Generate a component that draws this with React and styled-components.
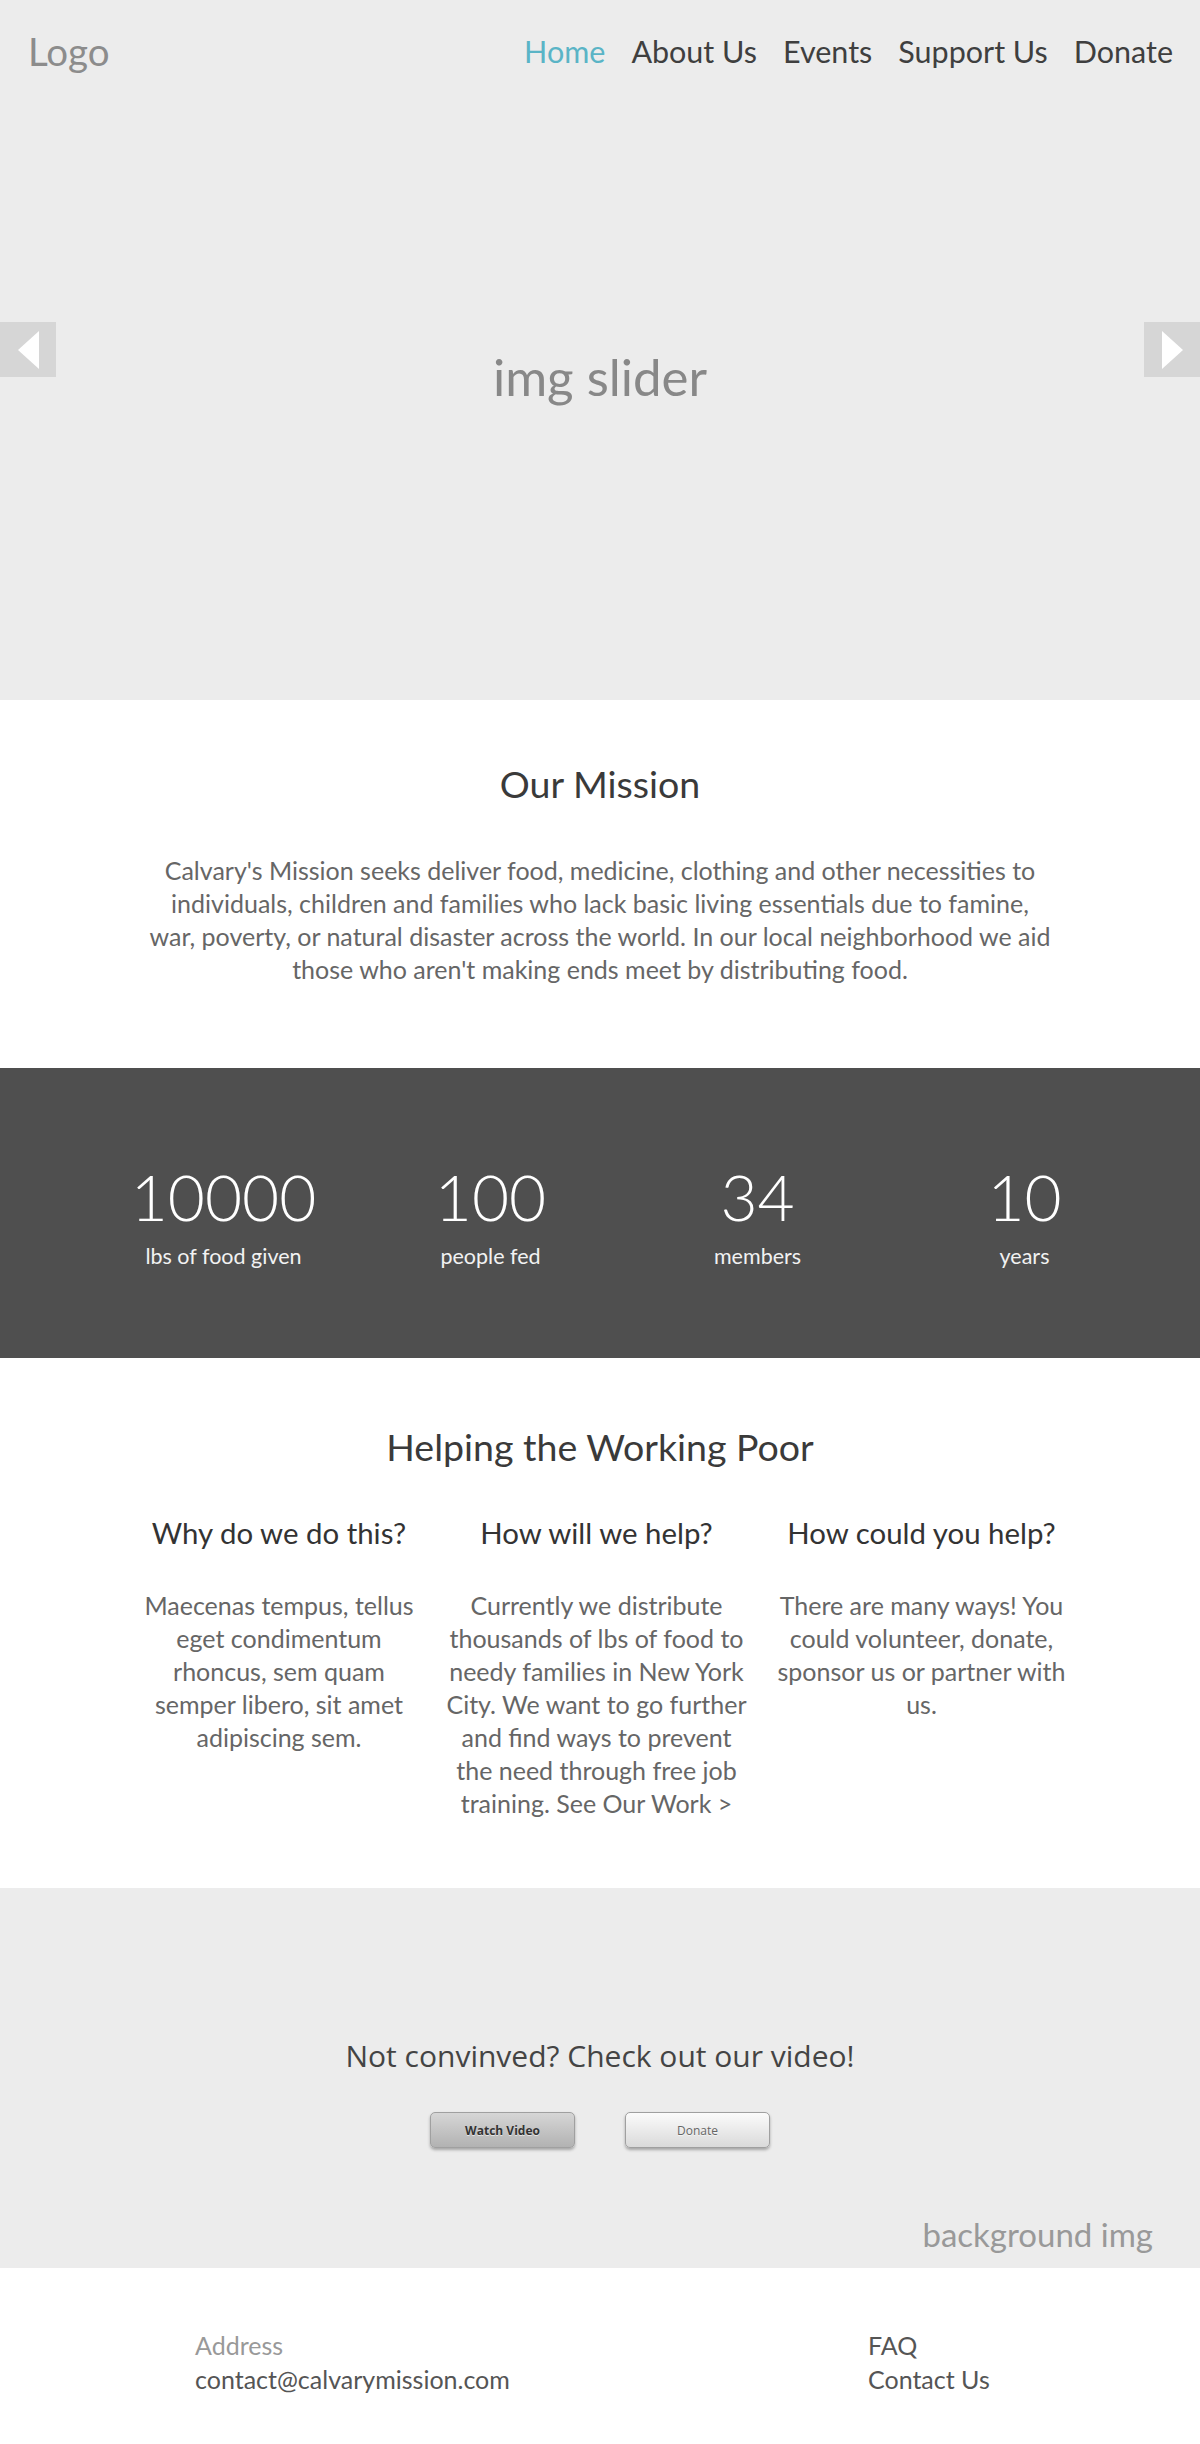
import React from 'react';
import styled, { createGlobalStyle } from 'styled-components';

const GlobalStyle = createGlobalStyle`
  body {
    margin: 0;
    font-family: Lato, "Open Sans", sans-serif;
    background: #fff;
  }
`;

const navItems = ['Home', 'About Us', 'Events', 'Support Us', 'Donate'];

const stats = [
  { value: '10000', label: 'lbs of food given' },
  { value: '100', label: 'people fed' },
  { value: '34', label: 'members' },
  { value: '10', label: 'years' },
];

const columns = [
  {
    title: 'Why do we do this?',
    text: 'Maecenas tempus, tellus eget condimentum rhoncus, sem quam semper libero, sit amet adipiscing sem.',
  },
  {
    title: 'How will we help?',
    text: 'Currently we distribute thousands of lbs of food to needy families in New York City. We want to go further and find ways to prevent the need through free job training. See Our Work >',
  },
  {
    title: 'How could you help?',
    text: 'There are many ways! You could volunteer, donate, sponsor us or partner with us.',
  },
];

const App = () => {
  return (
    <>
      <GlobalStyle />
      <Hero>
        <Header>
          <Logo>Logo</Logo>
          <Nav>
            {navItems.map((item) => (
              <NavLink key={item} active={item === 'Home' ? 1 : 0}>{item}</NavLink>
            ))}
          </Nav>
        </Header>
        <Slider>
          <Arrow side="left">
            <svg width="21" height="38" viewBox="0 0 21 38">
              <polygon points="0,19 21,0 21,38" fill="#fff" />
            </svg>
          </Arrow>
          <SliderLabel>img slider</SliderLabel>
          <Arrow side="right">
            <svg width="21" height="38" viewBox="0 0 21 38">
              <polygon points="21,19 0,0 0,38" fill="#fff" />
            </svg>
          </Arrow>
        </Slider>
      </Hero>

      <Mission>
        <SectionTitle>Our Mission</SectionTitle>
        <MissionText>
          Calvary's Mission seeks deliver food, medicine, clothing and other necessities to
          individuals, children and families who lack basic living essentials due to famine,
          war, poverty, or natural disaster across the world. In our local neighborhood we aid
          those who aren't making ends meet by distributing food.
        </MissionText>
      </Mission>

      <Stats>
        {stats.map((s) => (
          <Stat key={s.label}>
            <StatValue>{s.value}</StatValue>
            <StatLabel>{s.label}</StatLabel>
          </Stat>
        ))}
      </Stats>

      <Helping>
        <SectionTitle>Helping the Working Poor</SectionTitle>
        <Columns>
          {columns.map((c) => (
            <Column key={c.title}>
              <ColumnTitle>{c.title}</ColumnTitle>
              <ColumnText>{c.text}</ColumnText>
            </Column>
          ))}
        </Columns>
      </Helping>

      <Video>
        <VideoTitle>Not convinved? Check out our video!</VideoTitle>
        <Buttons>
          <Button primary={1}>Watch Video</Button>
          <Button>Donate</Button>
        </Buttons>
        <BgLabel>background img</BgLabel>
      </Video>

      <Footer>
        <FooterCol>
          <FooterMuted>Address</FooterMuted>
          <FooterLink>contact@calvarymission.com</FooterLink>
        </FooterCol>
        <FooterCol>
          <FooterLink>FAQ</FooterLink>
          <FooterLink>Contact Us</FooterLink>
        </FooterCol>
      </Footer>
    </>
  );
};

export default App;

const Hero = styled.section`
  background: #ececec;
  height: 700px;
  display: flex;
  flex-direction: column;
`;

const Header = styled.header`
  height: 102px;
  display: flex;
  align-items: center;
  justify-content: space-between;
  padding: 0 27px 0 28px;
`;

const Logo = styled.div`
  font-size: 38.5px;
  color: #8c8c8c;
`;

const Nav = styled.nav`
  display: flex;
  gap: 26px;
`;

const NavLink = styled.a`
  font-size: 30.5px;
  color: ${(p) => (p.active ? '#5ab4c6' : '#3f3f3f')};
  cursor: pointer;
`;

const Slider = styled.div`
  position: relative;
  flex: 1;
  display: flex;
  justify-content: center;
`;

const SliderLabel = styled.div`
  margin-top: 250px;
  height: 50px;
  line-height: 50px;
  font-size: 51px;
  color: #888;
`;

const Arrow = styled.div`
  position: absolute;
  top: 220px;
  ${(p) => (p.side === 'left' ? 'left: 0;' : 'right: 0;')}
  width: 56px;
  height: 55px;
  background: #d6d6d6;
  display: flex;
  align-items: center;
  justify-content: center;
`;

const Mission = styled.section`
  padding: 62px 0 82px;
  display: flex;
  flex-direction: column;
  align-items: center;
`;

const SectionTitle = styled.h2`
  margin: 0;
  font-size: 37.5px;
  line-height: 44px;
  font-weight: 400;
  color: #3a3a3a;
`;

const MissionText = styled.p`
  margin: 48px 0 0;
  max-width: 905px;
  text-align: center;
  font-size: 25px;
  line-height: 33px;
  color: #666;
`;

const Stats = styled.section`
  background: #4f4f4f;
  height: 290px;
  box-sizing: border-box;
  padding: 94px 42px 0 90px;
  display: grid;
  grid-template-columns: repeat(4, 1fr);
  align-items: start;
`;

const Stat = styled.div`
  display: flex;
  flex-direction: column;
  align-items: center;
  color: #fff;
`;

const StatValue = styled.div`
  font-size: 64px;
  line-height: 70px;
  font-weight: 300;
`;

const StatLabel = styled.div`
  margin-top: 12px;
  font-size: 21.5px;
  line-height: 24px;
  font-weight: 400;
  color: #f2f2f2;
`;

const Helping = styled.section`
  padding: 67px 0 68px;
  display: flex;
  flex-direction: column;
  align-items: center;
`;

const Columns = styled.div`
  margin-top: 46px;
  padding-left: 8px;
  display: grid;
  grid-template-columns: 285px 308px 300px;
  column-gap: 21px;
`;

const Column = styled.div`
  display: flex;
  flex-direction: column;
  align-items: center;
  text-align: center;
`;

const ColumnTitle = styled.h3`
  margin: 0;
  font-size: 29.4px;
  line-height: 36px;
  font-weight: 400;
  color: #333;
  white-space: nowrap;
`;

const ColumnText = styled.p`
  margin: 38px 0 0;
  font-size: 25px;
  line-height: 33px;
  color: #666;
`;

const Video = styled.section`
  background: #ececec;
  height: 380px;
  box-sizing: border-box;
  padding-top: 148px;
  display: flex;
  flex-direction: column;
  align-items: center;
`;

const VideoTitle = styled.h2`
  margin: 0;
  font-family: "Open Sans", sans-serif;
  font-size: 30px;
  line-height: 40px;
  font-weight: 400;
  color: #444;
`;

const Buttons = styled.div`
  margin-top: 36px;
  display: flex;
  gap: 50px;
`;

const Button = styled.button`
  width: 145px;
  height: 36px;
  border: 1px solid #a0a0a0;
  border-radius: 5px;
  font-family: "Open Sans", sans-serif;
  font-size: 12px;
  font-weight: ${(p) => (p.primary ? 700 : 400)};
  color: ${(p) => (p.primary ? '#333' : '#666')};
  text-shadow: 0 1px 0 rgba(255, 255, 255, 0.6);
  background: ${(p) =>
    p.primary
      ? 'linear-gradient(#d6d6d6, #b2b2b2)'
      : 'linear-gradient(#fbfbfb, #dadada)'};
  box-shadow: 0 2px 3px rgba(0, 0, 0, 0.3);
  cursor: pointer;
`;

const BgLabel = styled.div`
  align-self: flex-end;
  margin: 66px 47px 0 0;
  font-size: 33px;
  line-height: 40px;
  color: #999;
`;

const Footer = styled.footer`
  height: 176px;
  box-sizing: border-box;
  padding: 60px 0 0 195px;
  display: grid;
  grid-template-columns: 673px auto;
`;

const FooterCol = styled.div`
  display: flex;
  flex-direction: column;
`;

const FooterMuted = styled.div`
  font-size: 25px;
  line-height: 34px;
  color: #999;
`;

const FooterLink = styled.a`
  font-size: 25px;
  line-height: 34px;
  color: #555;
  cursor: pointer;
`;
